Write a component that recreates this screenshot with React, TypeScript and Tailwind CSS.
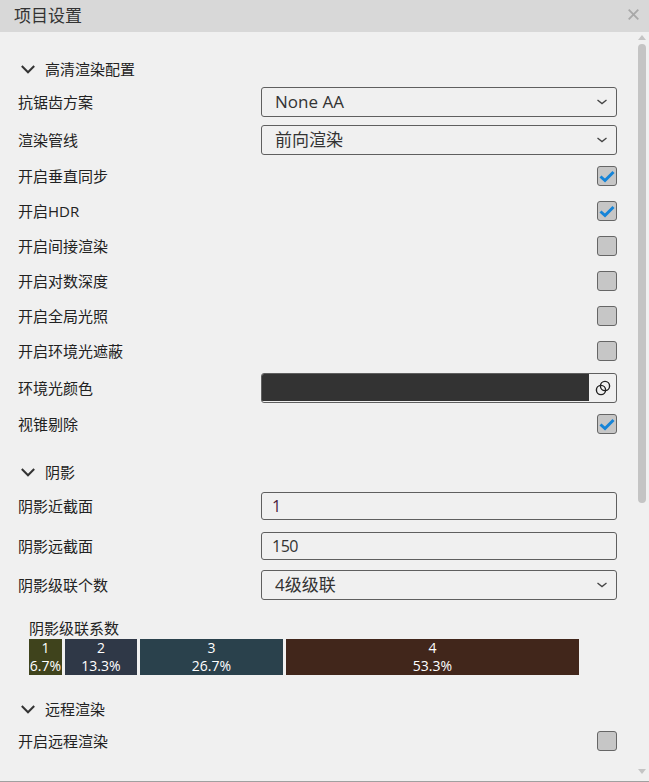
const CJK = "font-['Open_Sans','Noto_Sans_CJK_SC',sans-serif]";

function Chevron() {
  return (
    <svg width="14" height="9" viewBox="0 0 14 9" fill="none" className="shrink-0">
      <path d="M0.8 1 L7 7.3 L13.2 1" stroke="#333" strokeWidth="2" />
    </svg>
  );
}

function Section({ title, className }: { title: string; className: string }) {
  return (
    <div className={`flex h-[30px] items-center pl-[21px] ${className}`}>
      <Chevron />
      <span className="ml-[10px] text-[15px] text-[#222]">{title}</span>
    </div>
  );
}

function Label({ text }: { text: string }) {
  return <span className="w-[243px] shrink-0 text-[15px] text-[#222]">{text}</span>;
}

function SelectRow({ label, value, className = "" }: { label: string; value: string; className?: string }) {
  return (
    <div className={`flex h-[30px] items-center pl-[18px] ${className}`}>
      <Label text={label} />
      <div className="flex h-full w-[356px] items-center justify-between rounded-[3px] border border-[#5f5f5f] pl-[13px] pr-[9px]">
        <span className="text-[17px] text-[#333]">{value}</span>
        <svg width="10" height="6" viewBox="0 0 10 6" fill="none">
          <path d="M0.5 1 L5 4.6 L9.5 1" stroke="#444" strokeWidth="1.3" />
        </svg>
      </div>
    </div>
  );
}

function InputRow({ label, value, color, className = "" }: { label: string; value: string; color: string; className?: string }) {
  return (
    <div className={`flex h-[28px] items-center pl-[18px] ${className}`}>
      <Label text={label} />
      <div className="flex h-full w-[356px] items-center rounded-[3px] border border-[#5f5f5f] pl-[10px]">
        <span className={`text-[16px] tracking-[-0.5px] ${color}`}>{value}</span>
      </div>
    </div>
  );
}

function CheckRow({ label, checked = false }: { label: string; checked?: boolean }) {
  return (
    <div className="flex h-[35px] items-center pl-[18px]">
      <Label text={label} />
      <div className="-mt-px ml-auto flex size-[20px] items-center justify-center rounded-[3px] border border-[#666] bg-[#c6c6c6]">
        {checked && (
          <svg width="16" height="13" viewBox="0 0 16 13" fill="none">
            <path d="M1.5 6.5 L6 10.5 L14.5 2" stroke="#1584d8" strokeWidth="3" />
          </svg>
        )}
      </div>
    </div>
  );
}

function Bar({ n, pct, width, bg }: { n: string; pct: string; width: string; bg: string }) {
  return (
    <div className={`flex h-full shrink-0 flex-col items-center justify-center text-[14px] leading-[18px] text-white ${width} ${bg}`}>
      <span>{n}</span>
      <span>{pct}</span>
    </div>
  );
}

export default function App() {
  return (
    <div className={`flex h-[782px] w-[649px] flex-col overflow-hidden border-b border-[#a0a0a0] bg-[#f0f0f0] ${CJK}`}>
      <div className="flex h-8 shrink-0 items-center justify-between bg-[#d8d8d8] pl-[14px] pr-[10px]">
        <span className="text-[17px] text-[#333]">项目设置</span>
        <svg width="11" height="11" viewBox="0 0 11 11" fill="none" className="-mt-[3px]">
          <path d="M0.7 0.7 L10.3 10.3 M10.3 0.7 L0.7 10.3" stroke="#a8a8a8" strokeWidth="1.8" />
        </svg>
      </div>
      <div className="flex min-h-0 flex-1">
        <div className="w-[617px] shrink-0 pt-[22px]">
          <Section title="高清渲染配置" className="" />
          <SelectRow label="抗锯齿方案" value="None AA" className="mt-[3px]" />
          <SelectRow label="渲染管线" value="前向渲染" className="mt-2" />
          <div className="mt-1">
            <CheckRow label="开启垂直同步" checked />
            <CheckRow label="开启HDR" checked />
            <CheckRow label="开启间接渲染" />
            <CheckRow label="开启对数深度" />
            <CheckRow label="开启全局光照" />
            <CheckRow label="开启环境光遮蔽" />
          </div>
          <div className="mt-1 flex h-[30px] items-center pl-[18px]">
            <Label text="环境光颜色" />
            <div className="flex h-full w-[356px] overflow-hidden rounded-[3px] border border-[#5f5f5f]">
              <div className="h-[27px] flex-1 bg-[#333333]" />
              <div className="flex w-[27px] items-center justify-center">
                <svg width="16" height="16" viewBox="0 0 16 16" fill="none">
                  <circle cx="6" cy="10" r="4.6" stroke="#222" strokeWidth="1.4" />
                  <circle cx="10" cy="6" r="4.6" stroke="#222" strokeWidth="1.4" />
                </svg>
              </div>
            </div>
          </div>
          <div className="mt-1">
            <CheckRow label="视锥剔除" checked />
          </div>
          <Section title="阴影" className="mt-[15px]" />
          <InputRow label="阴影近截面" value="1" color="text-[#4a2040]" className="mt-[5px]" />
          <InputRow label="阴影远截面" value="150" color="text-[#333]" className="mt-3" />
          <SelectRow label="阴影级联个数" value="4级级联" className="mt-[10px]" />
          <div className="mt-5 pl-[29px]">
            <div className="h-[19px] text-[15px] leading-[16px] text-[#222]">阴影级联系数</div>
            <div className="flex h-9 gap-[3px]">
              <Bar n="1" pct="6.7%" width="w-[33px]" bg="bg-[#3f431c]" />
              <Bar n="2" pct="13.3%" width="w-[72px]" bg="bg-[#2f3847]" />
              <Bar n="3" pct="26.7%" width="w-[143px]" bg="bg-[#2a414c]" />
              <Bar n="4" pct="53.3%" width="w-[293px]" bg="bg-[#41261b]" />
            </div>
          </div>
          <Section title="远程渲染" className="mt-[19px]" />
          <CheckRow label="开启远程渲染" />
        </div>
        <div className="ml-[21px] flex w-2 shrink-0 flex-col items-center pt-[3px]">
          <div className="size-0 border-x-[4px] border-b-[5px] border-x-transparent border-b-[#c4c4c4]" />
          <div className="mt-1 h-[459px] w-2 rounded-full bg-[#c4c4c4]" />
          <div className="mt-[266px] size-0 border-x-[4px] border-t-[5px] border-x-transparent border-t-[#c4c4c4]" />
        </div>
      </div>
    </div>
  );
}
